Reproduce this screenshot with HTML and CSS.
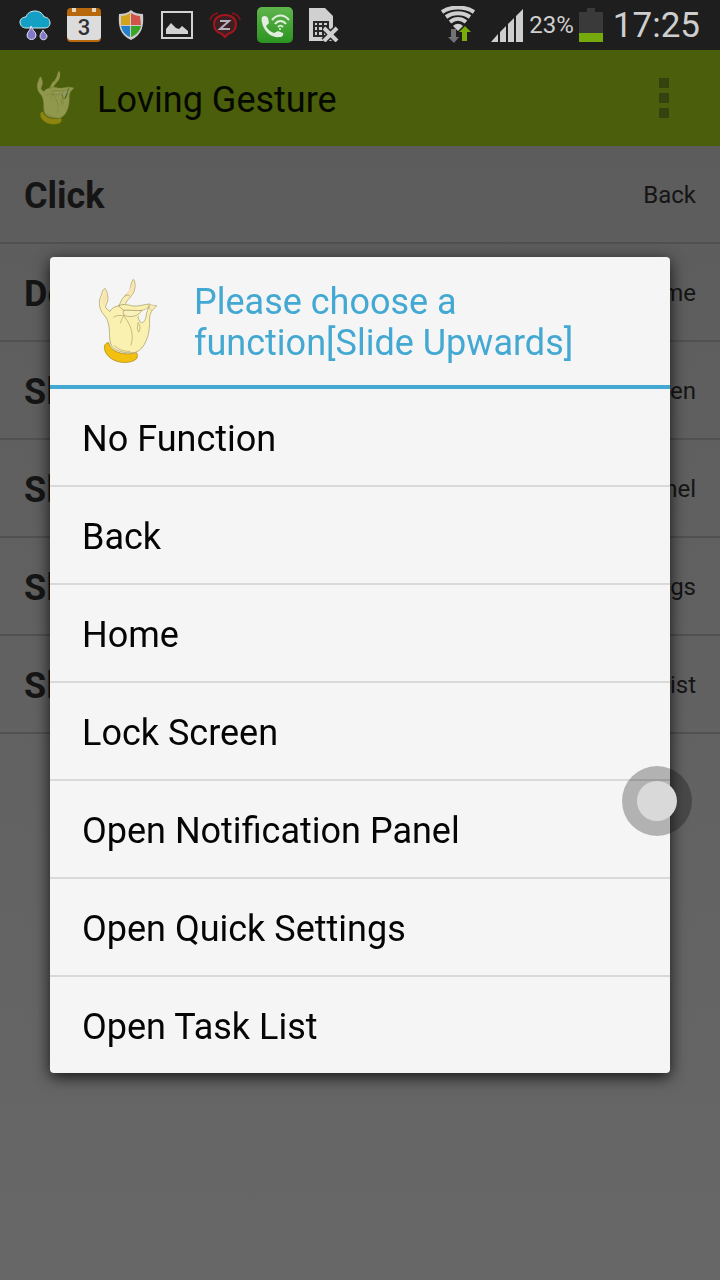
FILE: index.html
```html
<!DOCTYPE html>
<html lang="en">
<head>
    <meta charset="UTF-8">
    <meta name="viewport" content="width=device-width, initial-scale=1.0">
    <title>Loving Gesture</title>
    <link rel="stylesheet" href="styles.css">
</head>
<body>
<svg width="0" height="0" class="defs" aria-hidden="true">
    <symbol id="hand" viewBox="42 24 180 262">
        <!-- bracelet -->
        <path d="M74 219c-8-1-14 6-13 17 2 18 19 34 42 40 19 5 43 2 54-8 5-6 4-14 0-20-24 9-56 4-72-10-6-5-9-11-11-19z" fill="#f2c110" stroke="#a87c16" stroke-width="2"/>
        <!-- palm, little finger and thumb -->
        <path d="M62 55c6 6 9 18 10 30 0 12-8 20-8 28l14 12c3-9 14-16 27-17 22-2 40 3 60 6l20 6c-3 8-14 16-24 22l8 15c8 6 14-4 17-15 3-16 4-26 15-36l17 2c-12 10-21 22-21 38 1 26-2 48-10 66-7 18-17 30-33 36-24 4-51-1-67-14-12-13-10-34-11-50-1-20-5-36-14-46-12-13-17-26-16-44 0-8 5-14 7-22 1-7 3-12 9-17z" fill="#faf0b0" stroke="#a0975e" stroke-width="2" stroke-linejoin="round"/>
        <!-- raised finger -->
        <path d="M103 108c8-10 9-20 16-27 8-8 16-12 19-23 3-12 4-22 10-30 6 6 7 19 4 30-2 12-10 20-17 28-7 7-9 12-12 20z" fill="#faeeb2" stroke="#a0975e" stroke-width="2"/>
        <!-- bent fingers -->
        <path d="M104 108c10-7 25-4 41 0 16 3 34-4 52-6l-4 11c-9 6-20 11-32 10l-43-2z" fill="#faf0b0" stroke="#a0975e" stroke-width="2"/>
        <path d="M118 122c19-3 37 1 56 0-9 12-22 19-37 18-10 0-16-3-19-8z" fill="#faf2be" stroke="#a0975e" stroke-width="2"/>
        <path d="M174 124c6-3 11-6 16-9-6 14-8 28-17 42l-5-6-3-14z" fill="#f5f5f5"/>
        <path d="M62 58c7 8 8 22 5 34l-8 16c-8-10-7-20-3-29z" fill="#fae3b6"/>
        <path d="M148 32c4 8 4 18 1 27l-12 17-9-3c8-12 14-24 20-41z" fill="#fae3b6"/>
        <path d="M198 104l20 4-14 14-8-6z" fill="#faeab8" stroke="#a0975e"/>
        <path d="M88 142c12-8 20-4 33-5M120 138c-7 6-7 14-11 22M121 140c20 25 30 56 20 86M163 158c-3 9-5 20 1 29 6-8 5-16 1-25M92 228c13 13 27 17 46 17M122 79l10-4 5 3" fill="none" stroke="#aaa067" stroke-width="2" stroke-linecap="round"/>
    </symbol>
</svg>

<div class="status-bar">
    <div class="notifications">
        <svg width="32" height="32" viewBox="0 0 32 32">
            <path d="M7 19c-4 0-6-3-6-6s3-5 6-5c1-4 5-6 9-6 5 0 8 3 9 6 4 0 6 3 6 6 0 4-3 5-6 5z" fill="#14a0c4" stroke="#d5eef2" stroke-width="1"/>
            <path d="M12 17c1 4 5 6 5 9 0 6-9 6-9 0 0-3 4-5 4-9zM24 21c1 3 4 4 4 6 0 5-7 5-7 0 0-2 2-4 3-6z" fill="#8179c9" stroke="#e4e1f5"/>
        </svg>
        <svg width="34" height="34" viewBox="0 0 34 34">
            <rect width="34" height="34" rx="4" fill="#b9690d"/>
            <path d="M0 8h34v21a4 4 0 0 1-4 3H4a4 4 0 0 1-4-3z" fill="#dcdcdc"/>
            <path d="M7 0v4M27 0v4" stroke="#e8d9c0" stroke-width="4"/>
            <text x="17" y="27" class="calendar-day">3</text>
        </svg>
        <svg width="28" height="32" viewBox="0 0 28 32">
            <path d="M14 1c3 3 8 4 12 4 1 12-1 21-12 26C3 26 1 17 2 5c4 0 9-1 12-4z" fill="#ccc"/>
            <path d="M13 4v12H4V7c3 0 6-1 9-3z" fill="#d3a41b"/>
            <path d="M14 4c3 2 6 3 9 3l1 9H14z" fill="#d05548"/>
            <path d="M4 17h9v11c-5-2-8-6-9-11z" fill="#2480cc"/>
            <path d="M14 17h10c-1 5-5 9-10 11z" fill="#3ba528"/>
        </svg>
        <svg width="32" height="28" viewBox="0 0 32 28">
            <path d="M1 1h30v26H1z" fill="none" stroke="#d2d2d2" stroke-width="2"/>
            <path d="M5 23v-5l5-6 5 5 3 1 3-3 6 5v3z" fill="#d2d2d2"/>
        </svg>
        <svg width="32" height="30" viewBox="0 0 32 30">
            <path d="M1 10c1-4 4-6 8-7M31 10c-1-4-4-6-8-7" fill="none" stroke="#7b1519" stroke-width="2"/>
            <path d="M16 5c7 0 11 4 11 9 0 6-4 9-8 10l-3 3-3-3c-4-1-8-4-8-10 0-5 4-9 11-9z" fill="#3d2023" stroke="#a6151c" stroke-width="2"/>
            <path d="M11 11h9l-9 8h10" fill="none" stroke="#b7afb9" stroke-width="2"/>
        </svg>
        <svg width="36" height="36" viewBox="0 0 36 36">
            <defs>
                <linearGradient id="call" x2="0" y2="1"><stop stop-color="#5fb54c"/><stop offset="1" stop-color="#2b9420"/></linearGradient>
            </defs>
            <rect width="36" height="36" rx="5" fill="url(#call)"/>
            <path d="M5 10c2-2 5-1 6 1l1 5-3 3c2 4 5 6 8 7l4-2 5 2c1 2-1 4-3 4-8 1-14-4-17-11-1-3-2-7-1-9z" fill="#e3eddf"/>
            <path d="M15 13c5-6 12-6 17 0M18 17c3-4 8-4 11 0M21 20c2-2 3-2 5 0" fill="none" stroke="#e3eddf" stroke-width="2"/>
            <circle cx="23" cy="22" r="1" fill="#e3eddf"/>
        </svg>
        <svg width="30" height="34" viewBox="0 0 30 34">
            <path d="M0 0h16l8 8v25H0z" fill="#d0d0d0"/>
            <path d="M5 14h14v14H5zM5 18h14M5 23h14M9 14v14M14 14v14" fill="none" stroke="#292929" stroke-width="2"/>
            <path d="m15 20 13 13m0-13L15 33" stroke="#222" stroke-width="7"/>
            <path d="m15 20 13 13m0-13L15 33" stroke="#d0d0d0" stroke-width="4"/>
        </svg>
    </div>

    <div class="system">
        <svg class="wifi" width="36" height="38" viewBox="0 0 36 38">
            <path d="M2 6c9-6 23-6 32 0M6 11c7-5 17-5 24 0M10 16c5-4 11-4 16 0" fill="none" stroke="#cecece" stroke-width="4"/>
            <path d="m13 20c3-3 7-3 10 0l-5 5z" fill="#cecece"/>
            <path d="M11 23h5v8h3l-5 6-6-6h3z" fill="#727276"/>
            <path d="M22 35h5v-9h4l-6-6-6 6h3z" fill="#79ae0a"/>
        </svg>
        <svg class="signal" width="34" height="34" viewBox="0 0 34 34">
            <path d="M1 34l7-8v8zM10 24l6-6v16h-6zM18 16l6-6v24h-6zM26 8l7-7v33h-7z" fill="#cecece"/>
        </svg>
        <span class="percent">23%</span>
        <svg class="battery" width="24" height="34" viewBox="0 0 24 34">
            <path d="M0 4h8V0h8v4h8v30H0z" fill="#3a3a3a"/>
            <path d="M0 25h24v9H0z" fill="#75a90c"/>
        </svg>
        <span class="clock">17:25</span>
    </div>
</div>

<header class="action-bar">
    <svg class="app-icon" width="39" height="56"><use href="#hand"/></svg>
    <h1>Loving Gesture</h1>
    <button class="overflow" aria-label="More options"><i></i><i></i><i></i></button>
</header>

<main>
    <ul class="gestures">
        <li><b>Click</b><span>Back</span></li>
        <li><b>Double Click</b><span>Home</span></li>
        <li><b>Slide Upwards</b><span>Lock Screen</span></li>
        <li><b>Slide Downwards</b><span>Open Notification Panel</span></li>
        <li><b>Slide Left</b><span>Open Quick Settings</span></li>
        <li><b>Slide Right</b><span>Open Task List</span></li>
    </ul>
</main>

<div class="overlay">
    <section class="dialog" role="dialog" aria-labelledby="dialogTitle">
        <div class="dialog-header">
            <svg width="60" height="87"><use href="#hand"/></svg>
            <h2 id="dialogTitle">Please choose a function[Slide Upwards]</h2>
        </div>
        <div class="options">
            <button>No Function</button>
            <button>Back</button>
            <button>Home</button>
            <button>Lock Screen</button>
            <button>Open Notification Panel</button>
            <button>Open Quick Settings</button>
            <button>Open Task List</button>
        </div>
    </section>
</div>

<!-- floating touch button -->
<button class="touch-dot" aria-label="Gesture button"></button>
</body>
</html>
```

FILE: styles.css
```css
* {
    box-sizing: border-box;
}

body {
    font-family: Roboto, "Noto Sans", sans-serif;
    margin: 0;
    min-height: 100vh;
    background: linear-gradient(#5b5b5b, #676767);
    color: #151515;
}

button {
    font-family: inherit;
    border: none;
    background: none;
    padding: 0;
    cursor: pointer;
}

h1, h2 {
    margin: 0;
    padding-top: 4px;
    font-weight: 400;
    font-size: 36px;
}

svg {
    flex: none;
}

.defs {
    position: absolute;
}

/* status bar */
.status-bar {
    display: flex;
    justify-content: space-between;
    height: 50px;
    padding: 0 20px 0 19px;
    background: #1e1e1e;
    color: #cecece;
}

.notifications, .system {
    display: flex;
    align-items: center;
}

.notifications {
    gap: 16px;
}

.calendar-day {
    font-size: 22px;
    font-weight: 500;
    text-anchor: middle;
    fill: #303030;
}

.system {
    gap: 5px;
}

.signal {
    margin-left: 9px;
}

.percent {
    font-size: 24px;
}

.clock {
    font-size: 35px;
    margin-left: 5px;
}

/* action bar */
.action-bar {
    display: flex;
    align-items: center;
    height: 96px;
    padding: 0 32px 0 36px;
    background: #4a5e0b;
    color: #050800;
}

.action-bar h1 {
    flex: 1;
    margin-left: 22px;
}

.app-icon {
    opacity: 0.4;
}

.overflow {
    display: flex;
    flex-direction: column;
    align-items: center;
    gap: 5px;
    width: 48px;
}

.overflow i {
    width: 10px;
    height: 10px;
    background: #34420f;
}

/* gesture list */
.gestures {
    list-style: none;
    margin: 0;
    padding: 0;
}

.gestures li {
    display: flex;
    align-items: center;
    justify-content: space-between;
    height: 98px;
    padding: 0 24px;
    border-bottom: 2px solid #515151;
}

.gestures b {
    padding-top: 4px;
    font-size: 36px;
}

.gestures span {
    padding-top: 2px;
    font-size: 24px;
}

/* dialog */
.overlay {
    position: fixed;
    inset: 50px 0 0;
    display: flex;
    align-items: center;
    justify-content: center;
    padding: 0 50px;
}

.dialog {
    width: 100%;
    background: #f5f5f5;
    border-radius: 4px;
    box-shadow: 0 4px 16px rgba(0, 0, 0, 0.8);
    overflow: hidden;
}

.dialog-header {
    display: flex;
    align-items: center;
    gap: 36px;
    height: 132px;
    padding: 0 48px;
    border-bottom: 4px solid #43a9d2;
}

.dialog-header h2 {
    color: #43a9d2;
    line-height: 41px;
}

.options button {
    display: block;
    width: 100%;
    height: 98px;
    padding: 4px 32px 0;
    border-bottom: 2px solid #d9d9d9;
    font-size: 36px;
    text-align: left;
    color: #050505;
}

.options button:last-child {
    height: 96px;
    border-bottom: none;
}

.touch-dot {
    position: fixed;
    right: 28px;
    top: 766px;
    width: 70px;
    height: 70px;
    border: 15px solid rgba(0, 0, 0, 0.27);
    border-radius: 50%;
    background: #d9d9d9;
    background-clip: padding-box;
}
```
